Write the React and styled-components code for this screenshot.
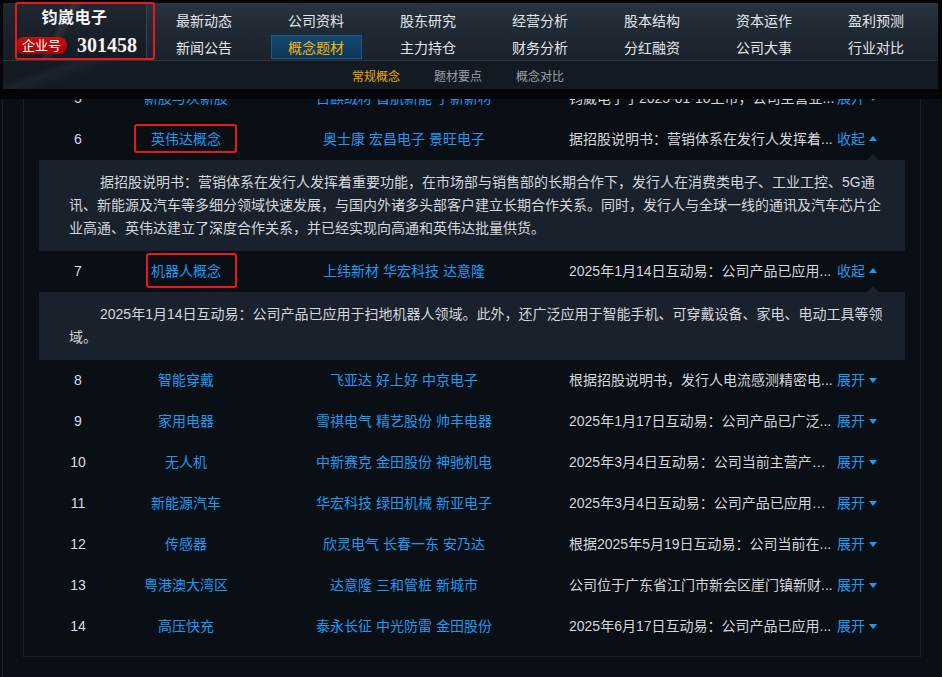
import styled, { createGlobalStyle } from "styled-components";

const GlobalStyle = createGlobalStyle`
  html, body {
    margin: 0;
    padding: 0;
    background: #0a0e15;
  }
  body {
    font-family: "Liberation Sans", "Noto Sans CJK SC", sans-serif;
    font-size: 14px;
    color: #d2d5d9;
  }
`;

const Page = styled.div`
  width: 942px;
  height: 677px;
  overflow: hidden;
`;

const Top = styled.div`
  background: #030508;
  padding: 3px 4px 10px 3px;
`;

const Header = styled.header`
  width: 935px;
  background: #161d26;
  box-shadow: inset 0 0 0 1px #222b36;
`;

const HeaderMain = styled.div`
  display: flex;
  height: 57px;
  background: linear-gradient(180deg, #2a3440 0%, #202a35 45%, #1a222c 100%);
`;

// annotation frame drawn over a piece of content
const Mark = styled.span`
  position: relative;
  display: ${(p) => (p.$block ? "flex" : "inline-block")};

  &::after {
    content: "";
    position: absolute;
    inset: ${(p) => p.$inset};
    border: 2px solid #e8191b;
    border-radius: 3px;
    pointer-events: none;
  }
`;

const Brand = styled(Mark)`
  width: 144px;
  flex-direction: column;
  align-items: center;
  padding-top: 5px;
  box-sizing: border-box;
  border-right: 1px solid #34414f;
  background: linear-gradient(118deg, transparent 0 38%, rgba(255, 255, 255, 0.07) 41%, transparent 47%),
    linear-gradient(180deg, #1f2731, #151b23);
`;

const BrandName = styled.div`
  font-size: 16px;
  font-weight: bold;
  line-height: 20px;
  color: #f4f4f4;
  letter-spacing: 0.5px;
`;

const IdRow = styled.div`
  display: flex;
  align-items: center;
  gap: 10px;
  margin-top: 7px;
  padding-left: 4px;
`;

const IdBadge = styled.span`
  height: 17px;
  line-height: 17px;
  padding: 0 6px;
  border-radius: 8px;
  font-size: 13px;
  color: #fff;
  background: linear-gradient(180deg, #c4110f, #9e0606);
`;

const IdCode = styled.span`
  font-family: "Liberation Serif", serif;
  font-size: 20px;
  font-weight: bold;
  color: #f2f2f2;
  line-height: 20px;
`;

const Nav = styled.nav`
  display: grid;
  grid-template-columns: repeat(7, 112px);
  grid-auto-rows: 26px;
  row-gap: 1px;
  padding: 4px 0 0 1px;
`;

const NavItem = styled.div`
  display: flex;
  align-items: center;
  justify-content: center;
`;

const NavLabel = styled.span`
  width: 91px;
  height: 24px;
  box-sizing: border-box;
  display: flex;
  align-items: center;
  justify-content: center;
  font-size: 14px;
  color: ${(p) => (p.$active ? "#f2b30c" : "#e2e5e9")};
  background: ${(p) =>
    p.$active ? "linear-gradient(180deg, #14496f, #0c3657)" : "transparent"};
  border: 1px solid ${(p) => (p.$active ? "#1d5a86" : "transparent")};
`;

const SubNav = styled.div`
  display: flex;
  height: 28px;
  align-items: center;
  padding-left: 332px;
  border-top: 1px solid #2b3643;
  background: linear-gradient(160deg, transparent 0 6%, rgba(255, 255, 255, 0.04) 8%, transparent 12%),
    #131a22;
`;

const SubNavItem = styled.span`
  width: 82px;
  text-align: center;
  font-size: 12px;
  color: ${(p) => (p.$active ? "#eaa80a" : "#9aa1a9")};
`;

const Body = styled.div`
  height: 579px;
  overflow: hidden;
  margin-left: 2px;
  border-left: 1px solid #1a212b;
  padding-left: 20px;
  background: #0a0e15;
`;

const Panel = styled.div`
  width: 898px;
  box-sizing: border-box;
  margin-top: -22px;
  border: 1px solid #1a212b;
  padding-bottom: 9px;
`;

const Row = styled.div`
  display: grid;
  grid-template-columns: 108px 108px 328px 1fr;
  height: 41px;
  align-items: center;
  line-height: 17px;
`;

const Num = styled.div`
  text-align: center;
  color: #d9dce0;
`;

const Concept = styled.div`
  text-align: center;
  color: #1d9bf0;
`;

const Stocks = styled.div`
  text-align: center;
  color: #1d9bf0;
`;

const DescCell = styled.div`
  display: flex;
  align-items: center;
  padding-left: 1px;
`;

const Desc = styled.span`
  width: 268px;
  white-space: nowrap;
  overflow: hidden;
  text-overflow: ellipsis;
  color: #d3d6da;
`;

const Toggle = styled.span`
  color: #1d9bf0;
`;

const Caret = styled.span`
  margin-left: 4px;
  width: 0;
  height: 0;
  border-left: 4px solid transparent;
  border-right: 4px solid transparent;
  ${(p) =>
    p.$up
      ? "border-bottom: 5px solid #1d9bf0; margin-bottom: 2px;"
      : "border-top: 5px solid #1d9bf0;"}
`;

const Detail = styled.div`
  position: relative;
  margin: 0 15px;
  padding: 11px 22px 11px 30px;
  background: #19212d;
  line-height: 23px;
  text-indent: 31px;
  color: #d4d7db;

  &::before {
    content: "";
    position: absolute;
    top: -6px;
    right: 26px;
    border-left: 6px solid transparent;
    border-right: 6px solid transparent;
    border-bottom: 6px solid #19212d;
  }
`;

const NAV = [
  "最新动态", "公司资料", "股东研究", "经营分析", "股本结构", "资本运作", "盈利预测",
  "新闻公告", "概念题材", "主力持仓", "财务分析", "分红融资", "公司大事", "行业对比",
];

const ROWS = [
  { n: 5, concept: "新股与次新股", stocks: ["古麒绒材", "首航新能", "宁新新材"], desc: "钧崴电子于2025-01-10上市，公司主营业..." },
  {
    n: 6,
    concept: "英伟达概念",
    mark: "-7px -16px -5px -17px",
    stocks: ["奥士康", "宏昌电子", "景旺电子"],
    desc: "据招股说明书：营销体系在发行人发挥着...",
    detail:
      "据招股说明书：营销体系在发行人发挥着重要功能，在市场部与销售部的长期合作下，发行人在消费类电子、工业工控、5G通讯、新能源及汽车等多细分领域快速发展，与国内外诸多头部客户建立长期合作关系。同时，发行人与全球一线的通讯及汽车芯片企业高通、英伟达建立了深度合作关系，并已经实现向高通和英伟达批量供货。",
  },
  {
    n: 7,
    concept: "机器人概念",
    mark: "-10px -16px -8px -5px",
    stocks: ["上纬新材", "华宏科技", "达意隆"],
    desc: "2025年1月14日互动易：公司产品已应用...",
    detail:
      "2025年1月14日互动易：公司产品已应用于扫地机器人领域。此外，还广泛应用于智能手机、可穿戴设备、家电、电动工具等领域。",
  },
  { n: 8, concept: "智能穿戴", stocks: ["飞亚达", "好上好", "中京电子"], desc: "根据招股说明书，发行人电流感测精密电..." },
  { n: 9, concept: "家用电器", stocks: ["雪祺电气", "精艺股份", "帅丰电器"], desc: "2025年1月17日互动易：公司产品已广泛..." },
  { n: 10, concept: "无人机", stocks: ["中新赛克", "金田股份", "神驰机电"], desc: "2025年3月4日互动易：公司当前主营产品..." },
  { n: 11, concept: "新能源汽车", stocks: ["华宏科技", "绿田机械", "新亚电子"], desc: "2025年3月4日互动易：公司产品已应用于..." },
  { n: 12, concept: "传感器", stocks: ["欣灵电气", "长春一东", "安乃达"], desc: "根据2025年5月19日互动易：公司当前在..." },
  { n: 13, concept: "粤港澳大湾区", stocks: ["达意隆", "三和管桩", "新城市"], desc: "公司位于广东省江门市新会区崖门镇新财..." },
  { n: 14, concept: "高压快充", stocks: ["泰永长征", "中光防雷", "金田股份"], desc: "2025年6月17日互动易：公司产品已应用..." },
];

function ConceptRow({ row }) {
  const open = Boolean(row.detail);
  return (
    <>
      <Row>
        <Num>{row.n}</Num>
        <Concept>
          {row.mark ? <Mark $inset={row.mark}>{row.concept}</Mark> : row.concept}
        </Concept>
        <Stocks>{row.stocks.join(" ")}</Stocks>
        <DescCell>
          <Desc>{row.desc}</Desc>
          <Toggle>{open ? "收起" : "展开"}</Toggle>
          <Caret $up={open} />
        </DescCell>
      </Row>
      {open && <Detail>{row.detail}</Detail>}
    </>
  );
}

export default function App() {
  return (
    <Page>
      <GlobalStyle />
      <Top>
        <Header>
          <HeaderMain>
            <Brand $block $inset="-1px -9px 0 12px">
              <BrandName>钧崴电子</BrandName>
              <IdRow>
                <IdBadge>企业号</IdBadge>
                <IdCode>301458</IdCode>
              </IdRow>
            </Brand>
            <Nav>
              {NAV.map((label) => (
                <NavItem key={label}>
                  <NavLabel $active={label === "概念题材"}>{label}</NavLabel>
                </NavItem>
              ))}
            </Nav>
          </HeaderMain>
          <SubNav>
            <SubNavItem $active>常规概念</SubNavItem>
            <SubNavItem>题材要点</SubNavItem>
            <SubNavItem>概念对比</SubNavItem>
          </SubNav>
        </Header>
      </Top>
      <Body>
        <Panel>
          {ROWS.map((row) => (
            <ConceptRow key={row.n} row={row} />
          ))}
        </Panel>
      </Body>
    </Page>
  );
}
